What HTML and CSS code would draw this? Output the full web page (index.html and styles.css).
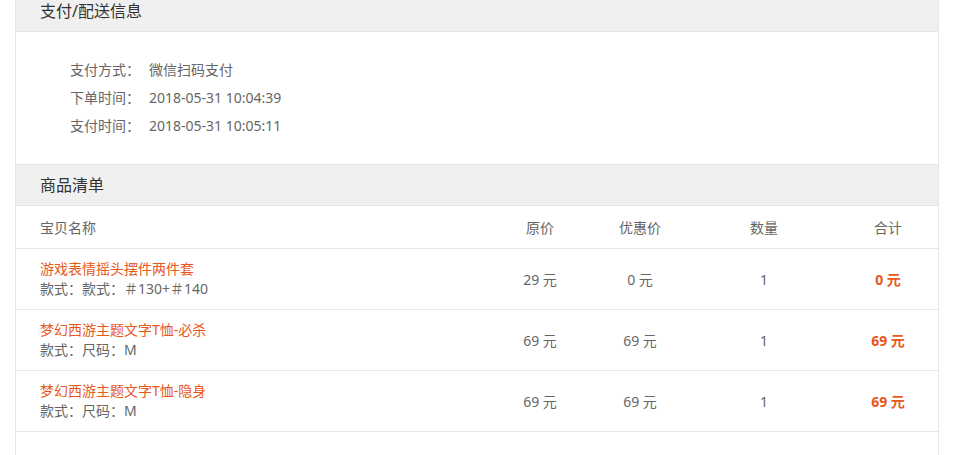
FILE: index.html
```html
<!DOCTYPE html>
<html lang="zh-CN">
<head>
<meta charset="utf-8">
<link rel="stylesheet" href="styles.css">
</head>
<body>
<div class="page">
  <section class="panel">
    <div class="panel-head">支付/配送信息</div>
    <div class="info">
      <div class="info-row"><span class="info-label">支付方式：</span><span>微信扫码支付</span></div>
      <div class="info-row"><span class="info-label">下单时间：</span><span>2018-05-31 10:04:39</span></div>
      <div class="info-row"><span class="info-label">支付时间：</span><span>2018-05-31 10:05:11</span></div>
    </div>
    <div class="panel-head head-2">商品清单</div>
    <div class="goods">
      <div class="g-row g-head">
        <div class="c-name">宝贝名称</div>
        <div class="c">原价</div>
        <div class="c">优惠价</div>
        <div class="c">数量</div>
        <div class="c">合计</div>
      </div>
      <div class="g-row">
        <div class="c-name"><div class="title">游戏表情摇头摆件两件套</div><div class="spec">款式：款式：＃130+＃140</div></div>
        <div class="c">29 元</div>
        <div class="c">0 元</div>
        <div class="c">1</div>
        <div class="c total">0 元</div>
      </div>
      <div class="g-row">
        <div class="c-name"><div class="title">梦幻西游主题文字T恤-必杀</div><div class="spec">款式：尺码：M</div></div>
        <div class="c">69 元</div>
        <div class="c">69 元</div>
        <div class="c">1</div>
        <div class="c total">69 元</div>
      </div>
      <div class="g-row">
        <div class="c-name"><div class="title">梦幻西游主题文字T恤-隐身</div><div class="spec">款式：尺码：M</div></div>
        <div class="c">69 元</div>
        <div class="c">69 元</div>
        <div class="c">1</div>
        <div class="c total">69 元</div>
      </div>
    </div>
  </section>
</div>
</body>
</html>
```
FILE: styles.css
```css
html, body {
  margin: 0;
  padding: 0;
  background: #fff;
  font-family: "Noto Sans", "Noto Sans CJK SC", sans-serif;
  color: #666;
  overflow: hidden;
}
.page {
  padding-left: 15px;
  margin-top: -9px;
}
.panel {
  width: 922px;
  border: 1px solid #e6e6e6;
  border-top: none;
  min-height: 480px;
}
.panel-head {
  height: 40px;
  line-height: 40px;
  background: #f0f0f0;
  border-bottom: 1px solid #e6e6e6;
  padding-left: 24px;
  font-size: 16px;
  color: #333;
}
.head-2 {
  border-top: 1px solid #e6e6e6;
}
.info {
  padding: 24px 0 24px 54px;
  font-size: 14px;
}
.info-row {
  display: flex;
  line-height: 28px;
}
.info-label {
  width: 79px;
}
.g-row {
  display: grid;
  grid-template-columns: 450px 100px 100px 148px 100px;
  padding-left: 24px;
  align-items: center;
  border-bottom: 1px solid #e6e6e6;
  height: 60px;
  font-size: 14px;
}
.g-head {
  height: 42px;
}
.c {
  text-align: center;
}
.title {
  color: #e8581a;
  line-height: 20px;
}
.spec {
  line-height: 20px;
}
.total {
  color: #e8581a;
  font-weight: bold;
}
```
